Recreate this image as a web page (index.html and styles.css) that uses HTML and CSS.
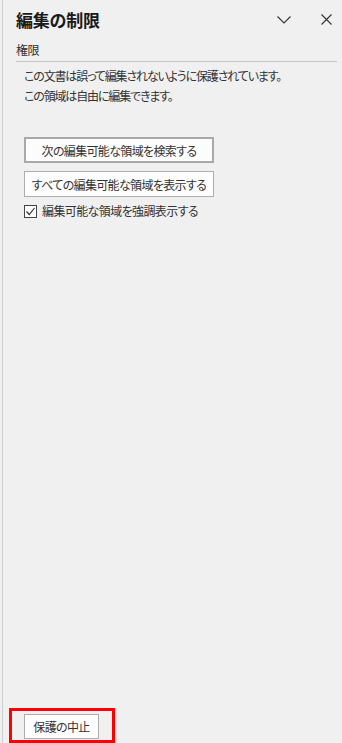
FILE: index.html
```html
<!DOCTYPE html>
<html lang="ja">
<head>
<meta charset="utf-8">
<link rel="stylesheet" href="styles.css">
</head>
<body>
<div class="panel">
  <div class="header">
    <div class="title">編集の制限</div>
    <div class="icons">
      <svg class="chev" width="14" height="8" viewBox="0 0 14 8"><path d="M0.5 0.5 L7 7 L13.5 0.5" fill="none" stroke="#333" stroke-width="1.1"/></svg>
      <svg class="close" width="11" height="11" viewBox="0 0 11 11"><path d="M0.5 0.5 L10.5 10.5 M10.5 0.5 L0.5 10.5" fill="none" stroke="#333" stroke-width="1.1"/></svg>
    </div>
  </div>
  <div class="section">権限</div>
  <div class="desc">
    <p>この文書は誤って編集されないように保護されています。</p>
    <p>この領域は自由に編集できます。</p>
  </div>
  <div class="actions">
    <button class="btn primary">次の編集可能な領域を検索する</button>
    <button class="btn">すべての編集可能な領域を表示する</button>
    <label class="check">
      <span class="box"><svg width="11" height="11" viewBox="0 0 11 11"><path d="M1.5 5.5 L4.3 8.5 L9.5 2" fill="none" stroke="#333" stroke-width="1.2"/></svg></span>
      <span>編集可能な領域を強調表示する</span>
    </label>
  </div>
  <div class="footer">
    <div class="highlight">
      <button class="btn small">保護の中止</button>
    </div>
  </div>
</div>
</body>
</html>
```

FILE: styles.css
```css
html, body {
  margin: 0;
  padding: 0;
  background: #f0f0f0;
}
body {
  width: 342px;
  height: 743px;
  overflow: hidden;
  font-family: "Noto Sans CJK JP", "Noto Sans", sans-serif;
  font-feature-settings: "palt";
  color: #262626;
}
.panel {
  margin-left: 2px;
  border-left: 1px solid #cfcfcf;
  height: 743px;
  box-sizing: border-box;
  display: flex;
  flex-direction: column;
}
.header {
  display: flex;
  align-items: center;
  justify-content: space-between;
  height: 38px;
  padding-left: 13px;
  padding-right: 10px;
}
.title {
  font-size: 17px;
  font-weight: bold;
  color: #1a1a1a;
  letter-spacing: -0.2px;
}
.icons {
  display: flex;
  align-items: center;
  gap: 30px;
}
.chev { margin-top: 1px; }
.section {
  margin-left: 13px;
  margin-right: 5px;
  font-size: 12px;
  letter-spacing: -0.5px;
  line-height: 16px;
  padding-top: 4px;
  padding-bottom: 3px;
  border-bottom: 1px solid #c6c6c6;
  color: #333;
}
.desc {
  padding-left: 21px;
  padding-top: 4px;
  font-size: 12px;
  letter-spacing: -1.15px;
  line-height: 20px;
  color: #333;
}
.desc p { margin: 0; }
.actions {
  padding-left: 21px;
  padding-top: 31px;
  display: flex;
  flex-direction: column;
  align-items: flex-start;
}
.btn {
  font-family: inherit;
  font-feature-settings: "palt";
  font-size: 12px;
  letter-spacing: -0.65px;
  color: #333;
  background: #fdfdfd;
  border: 1px solid #adadad;
  padding: 0;
  margin: 0;
  box-sizing: border-box;
  width: 190px;
  height: 26px;
}
.btn.primary {
  border: 2px solid #a9a9a9;
  height: 26px;
  margin-bottom: 8px;
}
.check {
  display: flex;
  align-items: center;
  gap: 5px;
  margin-top: 7px;
  font-size: 12px;
  letter-spacing: -0.6px;
  color: #333;
  line-height: 14px;
}
.box {
  width: 13px;
  height: 13px;
  box-sizing: border-box;
  border: 1px solid #444;
  background: #fff;
  display: flex;
  align-items: center;
  justify-content: center;
}
.box svg { display: block; }
.footer {
  margin-top: auto;
  padding-left: 6px;
}
.highlight {
  display: inline-block;
  border: 3px solid #ff0000;
  padding: 3px 13px 1px 12px;
}
.btn.small {
  width: 75px;
  height: 25px;
  display: block;
}
```
